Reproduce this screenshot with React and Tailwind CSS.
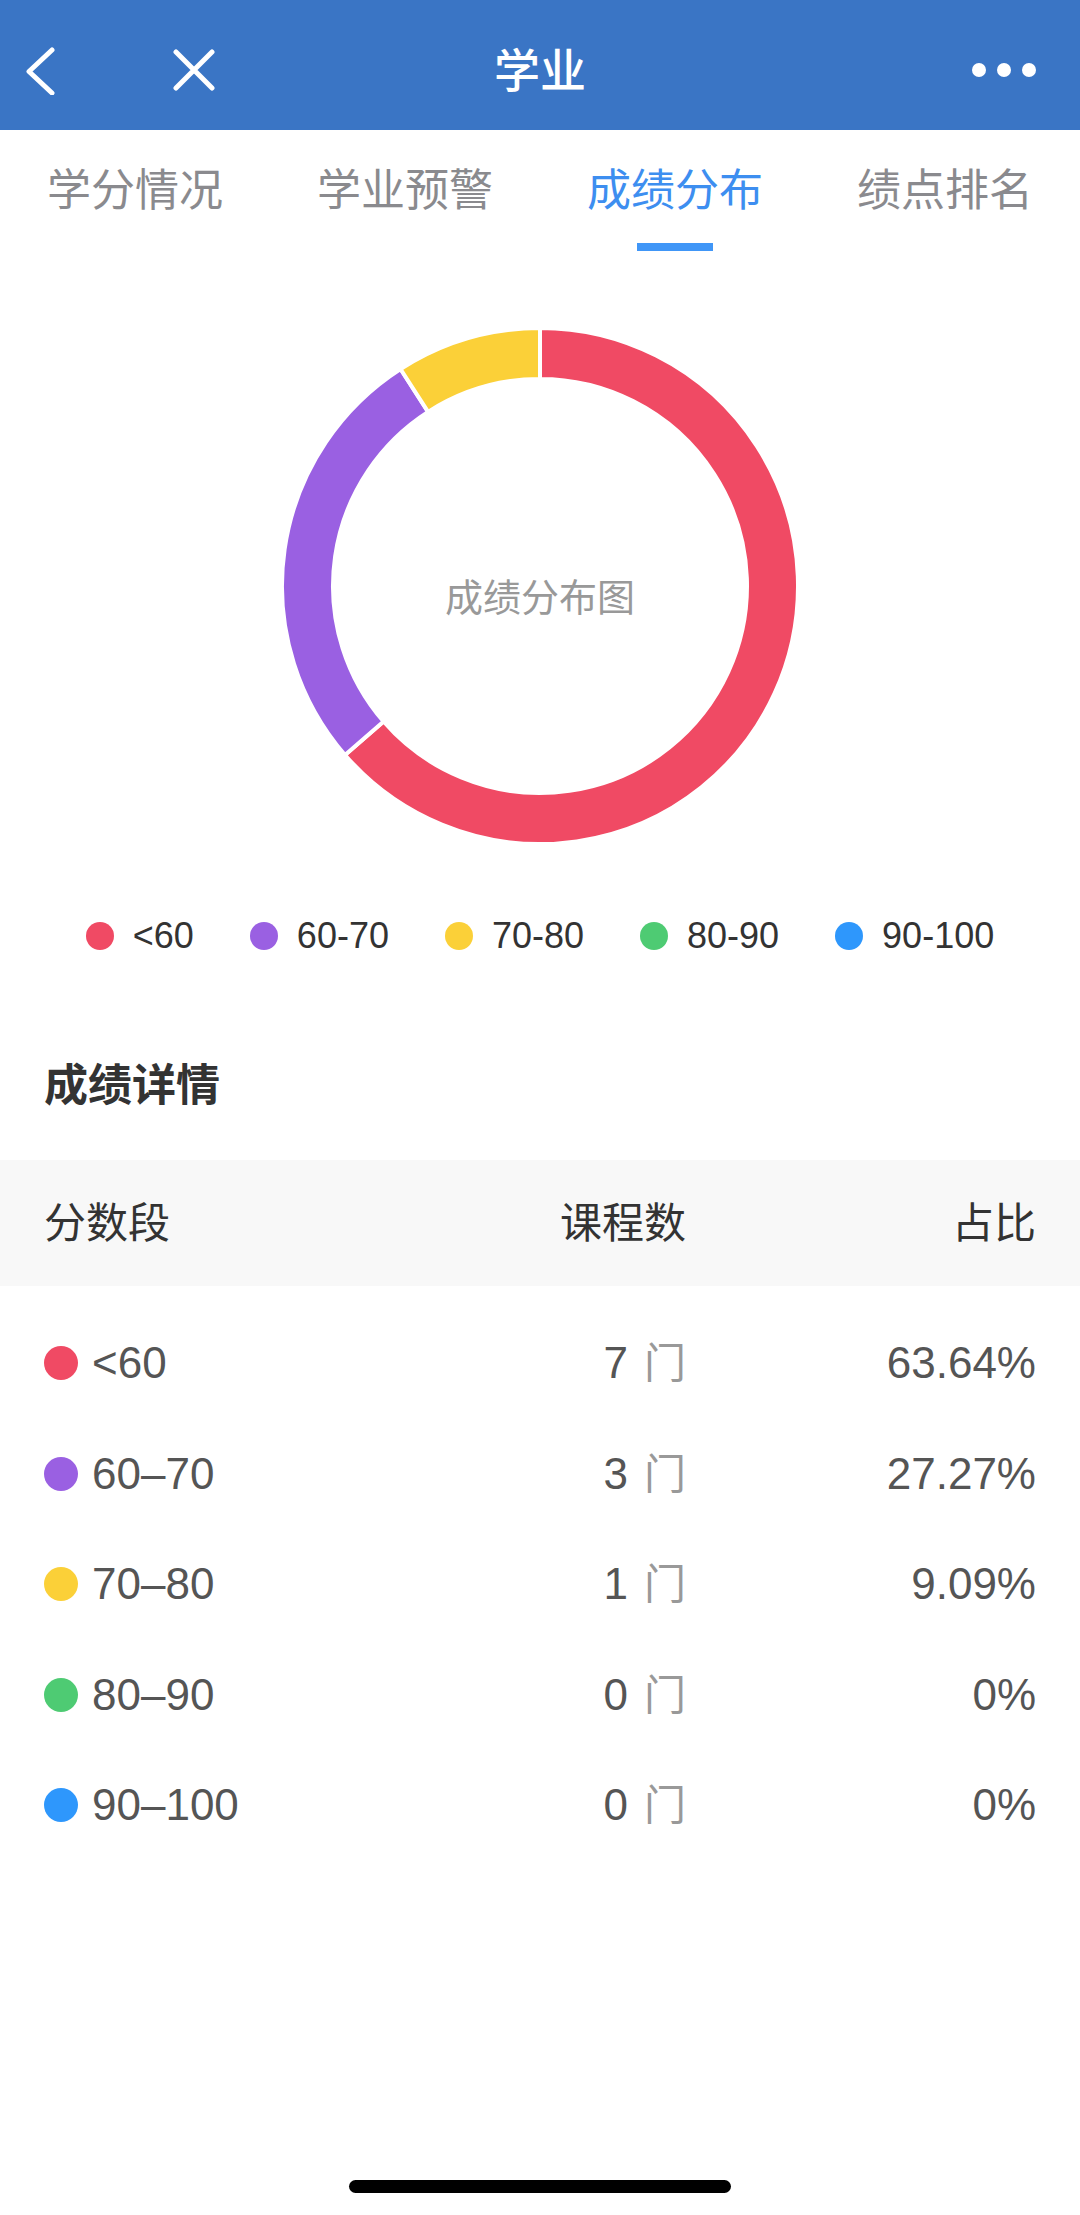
import React from 'react'

const segments = [
    { label: '<60', row: '<60', count: 7, pct: '63.64%', color: '#F04A64', dot: 'bg-[#F04A64]' },
    { label: '60-70', row: '60–70', count: 3, pct: '27.27%', color: '#9A60E2', dot: 'bg-[#9A60E2]' },
    { label: '70-80', row: '70–80', count: 1, pct: '9.09%', color: '#FBD038', dot: 'bg-[#FBD038]' },
    { label: '80-90', row: '80–90', count: 0, pct: '0%', color: '#4ECB73', dot: 'bg-[#4ECB73]' },
    { label: '90-100', row: '90–100', count: 0, pct: '0%', color: '#2E97FC', dot: 'bg-[#2E97FC]' },
]

const tabs = ['学分情况', '学业预警', '成绩分布', '绩点排名']

// ring sector path, angles in degrees clockwise from 12 o'clock
const sector = (cx, cy, R, r, a0, a1) => {
    const pt = (rad, a) => {
        const t = (a * Math.PI) / 180
        return [cx + rad * Math.sin(t), cy - rad * Math.cos(t)]
    }
    const large = a1 - a0 > 180 ? 1 : 0
    const [x0, y0] = pt(R, a0)
    const [x1, y1] = pt(R, a1)
    const [x2, y2] = pt(r, a1)
    const [x3, y3] = pt(r, a0)
    return `M${x0} ${y0} A${R} ${R} 0 ${large} 1 ${x1} ${y1} L${x2} ${y2} A${r} ${r} 0 ${large} 0 ${x3} ${y3} Z`
}

const Donut = () => {
    const total = segments.reduce((s, x) => s + x.count, 0)
    let start = 0
    const arcs = segments
        .filter(s => s.count > 0)
        .map(s => {
            const end = start + (s.count / total) * 360
            const d = sector(260, 260, 258, 207, start, end)
            start = end
            return <path key={s.label} d={d} fill={s.color} stroke="#fff" strokeWidth="4" strokeLinejoin="round" />
        })

    return (
        <div className="relative w-[520px] h-[520px] mx-auto mt-[75px]">
            <svg width="520" height="520" viewBox="0 0 520 520">{arcs}</svg>
            <div className="absolute inset-0 flex items-center justify-center pt-[24px]">
                <span className="text-[38px] text-[#999999]">成绩分布图</span>
            </div>
        </div>
    )
}

const App = () => {
    return (
        <div className="w-[1080px] h-[2215px] bg-white flex flex-col font-['Liberation_Sans','Noto_Sans_CJK_SC',sans-serif]">
            {/* Nav bar */}
            <div className="h-[130px] bg-[#3A75C5] grid grid-cols-[1fr_auto_1fr] items-center pt-[12px]">
                <div className="flex items-center pl-[25px]">
                    <svg width="30" height="48" viewBox="0 0 30 48">
                        <path d="M27 3 L4 24.5 L27 46" fill="none" stroke="#fff" strokeWidth="5" strokeLinecap="round" strokeLinejoin="round" />
                    </svg>
                    <svg className="ml-[117px]" width="44" height="44" viewBox="0 0 44 44">
                        <path d="M4 3 L40 39 M40 3 L4 39" fill="none" stroke="#fff" strokeWidth="5" strokeLinecap="round" />
                    </svg>
                </div>
                <div className="text-[46px] leading-[60px] font-medium text-white">学业</div>
                <div className="flex items-center justify-end gap-[11px] pr-[44px] pb-[2px]">
                    <span className="w-[14px] h-[14px] rounded-full bg-white" />
                    <span className="w-[14px] h-[14px] rounded-full bg-white" />
                    <span className="w-[14px] h-[14px] rounded-full bg-white" />
                </div>
            </div>

            {/* Tabs */}
            <div className="grid grid-cols-4">
                {tabs.map((t, i) => {
                    const active = i === 2
                    return (
                        <div key={t} className="flex flex-col items-center pt-[31px]">
                            <span className={`text-[44px] leading-[60px] ${active ? 'text-[#3D8EF0]' : 'text-[#8A8A8E]'}`}>{t}</span>
                            <span className={`mt-[22px] w-[76px] h-[8px] ${active ? 'bg-[#4096F7]' : 'bg-transparent'}`} />
                        </div>
                    )
                })}
            </div>

            <Donut />

            {/* Legend */}
            <div className="flex items-center justify-center gap-[56px] mt-[68px] h-[44px]">
                {segments.map(s => (
                    <div key={s.label} className="flex items-center gap-[19px]">
                        <span className={`w-[28px] h-[28px] rounded-full ${s.dot}`} />
                        <span className="text-[36px] leading-[44px] text-[#333333]">{s.label}</span>
                    </div>
                ))}
            </div>

            {/* Detail */}
            <div className="mt-[98px] pl-[44px] text-[44px] leading-[60px] font-bold text-[#333333]">成绩详情</div>

            <div className="mt-[44px] h-[126px] bg-[#F8F8F8] flex items-center px-[44px] text-[42px] text-[#333333]">
                <div className="w-[321px]">分数段</div>
                <div className="flex-1 text-right">课程数</div>
                <div className="w-[350px] text-right">占比</div>
            </div>

            <div className="pt-[22px]">
                {segments.map(s => (
                    <div key={s.label} className="h-[110.5px] flex items-center px-[44px] text-[44px] text-[#555555]">
                        <div className="w-[321px] flex items-center gap-[14px]">
                            <span className={`w-[34px] h-[34px] rounded-full ${s.dot}`} />
                            <span>{s.row}</span>
                        </div>
                        <div className="flex-1 text-right">
                            {s.count}<span className="ml-[16px] text-[#999999] text-[42px]">门</span>
                        </div>
                        <div className="w-[350px] text-right">{s.pct}</div>
                    </div>
                ))}
            </div>

            {/* Home indicator */}
            <div className="mt-auto mb-[22px] mx-auto w-[382px] h-[13px] rounded-full bg-black" />
        </div>
    )
}

export default App
